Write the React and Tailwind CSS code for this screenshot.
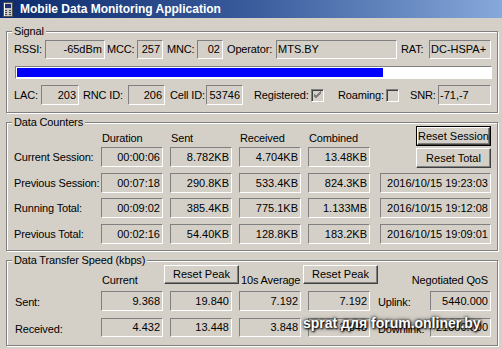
import React from "react";

const sunken =
  "border border-t-[#808080] border-l-[#808080] border-r-white border-b-white";

function Box({ w, right = true, children }) {
  return (
    <div
      className={`${w} h-full shrink-0 flex items-center ${sunken} tracking-normal whitespace-nowrap overflow-hidden ${
        right ? "justify-end pr-[2px]" : "justify-start pl-[1px]"
      }`}
    >
      {children}
    </div>
  );
}

function Btn({ w, def = false, children }) {
  return (
    <div
      className={`${w} h-full shrink-0 ${
        def ? "border border-black" : ""
      } flex`}
    >
      <div className="flex-1 flex items-center justify-center border border-t-white border-l-white border-r-[#404040] border-b-[#404040] shadow-[inset_-1px_-1px_0_#808080] tracking-normal whitespace-nowrap">
        {children}
      </div>
    </div>
  );
}

function Check({ checked }) {
  return (
    <div className={`w-[13px] h-[13px] shrink-0 ${sunken} shadow-[inset_1px_1px_0_#404040]`}>
      {checked && (
        <svg width="11" height="11" viewBox="0 0 11 11" className="block">
          <path d="M2 5 L4 7 L9 2 M2 6 L4 8 L9 3 M2 4 L4 6 L9 1" stroke="#808080" strokeWidth="1" fill="none" />
        </svg>
      )}
    </div>
  );
}

function Group({ label, className, children }) {
  return (
    <div
      className={`relative ml-[6px] w-[492px] border border-[#808080] shadow-[inset_1px_1px_0_#fff,1px_1px_0_#fff] ${className}`}
    >
      <span className="absolute -top-[7px] left-[5px] px-[2px] bg-[#d4d0c8] whitespace-nowrap">
        {label}
      </span>
      {children}
    </div>
  );
}

function PhoneIcon() {
  return (
    <svg width="10" height="15" viewBox="0 0 10 15" className="block">
      <rect x="0.5" y="0.5" width="9" height="14" fill="#c8c8c8" stroke="#505050" />
      <rect x="2" y="2" width="6" height="4" fill="#1c2f6a" />
      <rect x="2" y="8" width="2" height="1" fill="#404040" />
      <rect x="6" y="8" width="2" height="1" fill="#404040" />
      <rect x="2" y="10" width="2" height="1" fill="#404040" />
      <rect x="6" y="10" width="2" height="1" fill="#404040" />
      <rect x="2" y="12" width="2" height="1" fill="#404040" />
      <rect x="6" y="12" width="2" height="1" fill="#404040" />
      <rect x="1" y="1" width="1" height="13" fill="#ffffff" />
    </svg>
  );
}

export default function App() {
  const counters = [
    ["Current Session:", "00:00:06", "8.782KB", "4.704KB", "13.48KB", null, "mt-[1px]"],
    ["Previous Session:", "00:07:18", "290.8KB", "533.4KB", "824.3KB", "2016/10/15 19:23:03", "mt-[6px]"],
    ["Running Total:", "00:09:02", "385.4KB", "775.1KB", "1.133MB", "2016/10/15 19:12:08", "mt-[5px]"],
    ["Previous Total:", "00:02:16", "54.40KB", "128.8KB", "183.2KB", "2016/10/15 19:09:01", "mt-[6px]"],
  ];

  return (
    <div className="w-[502px] h-[349px] bg-[#d4d0c8] relative overflow-hidden text-[11px] leading-[13px] text-black font-['Liberation_Sans',Arial,sans-serif] tracking-[-0.15px]">
      {/* Title bar */}
      <div className="h-[18px] flex items-center bg-linear-to-r from-[#0c2a6c] via-[#3b5c9c] to-[#86a8da]">
        <div className="ml-[3px]">
          <PhoneIcon />
        </div>
        <span className="ml-[7px] text-white font-bold text-[12px] tracking-normal">
          Mobile Data Monitoring Application
        </span>
      </div>

      {/* Signal */}
      <Group label="Signal" className="mt-[13px] h-[82px] pt-[8px] pl-[7px]">
        <div className="flex items-center h-[19px]">
          <span className="w-[31px] shrink-0">RSSI:</span>
          <Box w="w-[60px]">-65dBm</Box>
          <span className="ml-[2px] w-[30px] shrink-0">MCC:</span>
          <Box w="w-[26px]">257</Box>
          <span className="ml-[4px] w-[30px] shrink-0">MNC:</span>
          <Box w="w-[26px]">02</Box>
          <span className="ml-[4px] w-[49px] shrink-0">Operator:</span>
          <Box w="w-[121px]" right={false}>MTS.BY</Box>
          <span className="ml-[4px] w-[28px] shrink-0">RAT:</span>
          <Box w="w-[62px]" right={false}>DC-HSPA+</Box>
        </div>
        <div className={`mt-[7px] ml-[1px] w-[477px] h-[13px] bg-white p-[1px] ${sunken}`}>
          <div className="w-[366px] h-full bg-[#0000ff]" />
        </div>
        <div className="flex items-center h-[20px] mt-[6px]">
          <span className="w-[27px] shrink-0">LAC:</span>
          <Box w="w-[38px]">203</Box>
          <span className="ml-[4px] w-[45px] shrink-0">RNC ID:</span>
          <Box w="w-[37px]">206</Box>
          <span className="ml-[5px] w-[36px] shrink-0">Cell ID:</span>
          <Box w="w-[37px]">53746</Box>
          <span className="ml-[11px] w-[57px] shrink-0">Registered:</span>
          <Check checked />
          <span className="ml-[14px] w-[48px] shrink-0">Roaming:</span>
          <Check />
          <span className="ml-[11px] w-[28px] shrink-0">SNR:</span>
          <Box w="w-[53px]" right={false}>-71,-7</Box>
        </div>
      </Group>

      {/* Data Counters */}
      <Group label="Data Counters" className="mt-[9px] h-[129px] pt-[3px] pl-[7px]">
        <div className="flex items-end h-[20px]">
          <span className="w-[87px] shrink-0" />
          <span className="w-[69px] shrink-0 pl-[1px] mb-[1px]">Duration</span>
          <span className="w-[69px] shrink-0 pl-[1px] mb-[1px]">Sent</span>
          <span className="w-[69px] shrink-0 pl-[1px] mb-[1px]">Received</span>
          <span className="w-[108px] shrink-0 pl-[1px] mb-[1px]">Combined</span>
          <Btn w="w-[75px]" def>Reset Session</Btn>
        </div>
        {counters.map(([label, d, s, r, c, date, mt]) => (
          <div key={label} className={`flex items-center h-[20px] ${mt}`}>
            <span className="w-[87px] shrink-0 whitespace-nowrap">{label}</span>
            <Box w="w-[62px]">{d}</Box>
            <div className="w-[7px] shrink-0" />
            <Box w="w-[62px]">{s}</Box>
            <div className="w-[7px] shrink-0" />
            <Box w="w-[62px]">{r}</Box>
            <div className="w-[7px] shrink-0" />
            <Box w="w-[62px]">{c}</Box>
            {date ? (
              <>
                <div className="w-[10px] shrink-0" />
                <Box w="w-[111px]">{date}</Box>
              </>
            ) : (
              <>
                <div className="w-[46px] shrink-0" />
                <div className="h-[20px] mt-[2px] flex">
                  <Btn w="w-[75px]">Reset Total</Btn>
                </div>
              </>
            )}
          </div>
        ))}
      </Group>

      {/* Data Transfer Speed */}
      <Group label="Data Transfer Speed (kbps)" className="mt-[9px] h-[86px] pt-[4px] pl-[7px]">
        <div className="flex items-end h-[19px]">
          <span className="w-[87px] shrink-0" />
          <span className="w-[63px] shrink-0 pl-[1px] -mb-[3px]">Current</span>
          <Btn w="w-[75px]">Reset Peak</Btn>
          <span className="w-[64px] shrink-0 pl-[2px] -mb-[3px] whitespace-nowrap">10s Average</span>
          <Btn w="w-[75px]">Reset Peak</Btn>
          <span className="w-[110px] shrink-0 text-right -mb-[3px] whitespace-nowrap">Negotiated QoS</span>
        </div>
        {[
          ["Sent:", "9.368", "19.840", "7.192", "7.192", "Uplink:", "5440.000", "h-[20px]"],
          ["Received:", "4.432", "13.448", "3.848", "3.848", "Downlink:", "21000.000", "h-[19px]"],
        ].map(([label, a, b, c, d, ql, qv, h]) => (
          <div key={label} className={`flex items-center ${h} mt-[7px]`}>
            <span className="w-[87px] shrink-0 pl-[1px] pt-[3px]">{label}</span>
            <Box w="w-[62px]">{a}</Box>
            <div className="w-[7px] shrink-0" />
            <Box w="w-[62px]">{b}</Box>
            <div className="w-[7px] shrink-0" />
            <Box w="w-[62px]">{c}</Box>
            <div className="w-[7px] shrink-0" />
            <Box w="w-[62px]">{d}</Box>
            <span className="ml-[8px] w-[52px] shrink-0 pt-[3px]">{ql}</span>
            <Box w="w-[61px]">{qv}</Box>
          </div>
        ))}
      </Group>

      {/* Watermark */}
      <div className="absolute left-[303px] top-[315px] text-[14px] leading-[16px] font-bold text-white tracking-normal whitespace-nowrap [text-shadow:1px_1px_2px_#000,0_0_3px_#000,0_0_5px_rgba(0,0,0,0.6)]">
        sprat для forum.onliner.by
      </div>
    </div>
  );
}
